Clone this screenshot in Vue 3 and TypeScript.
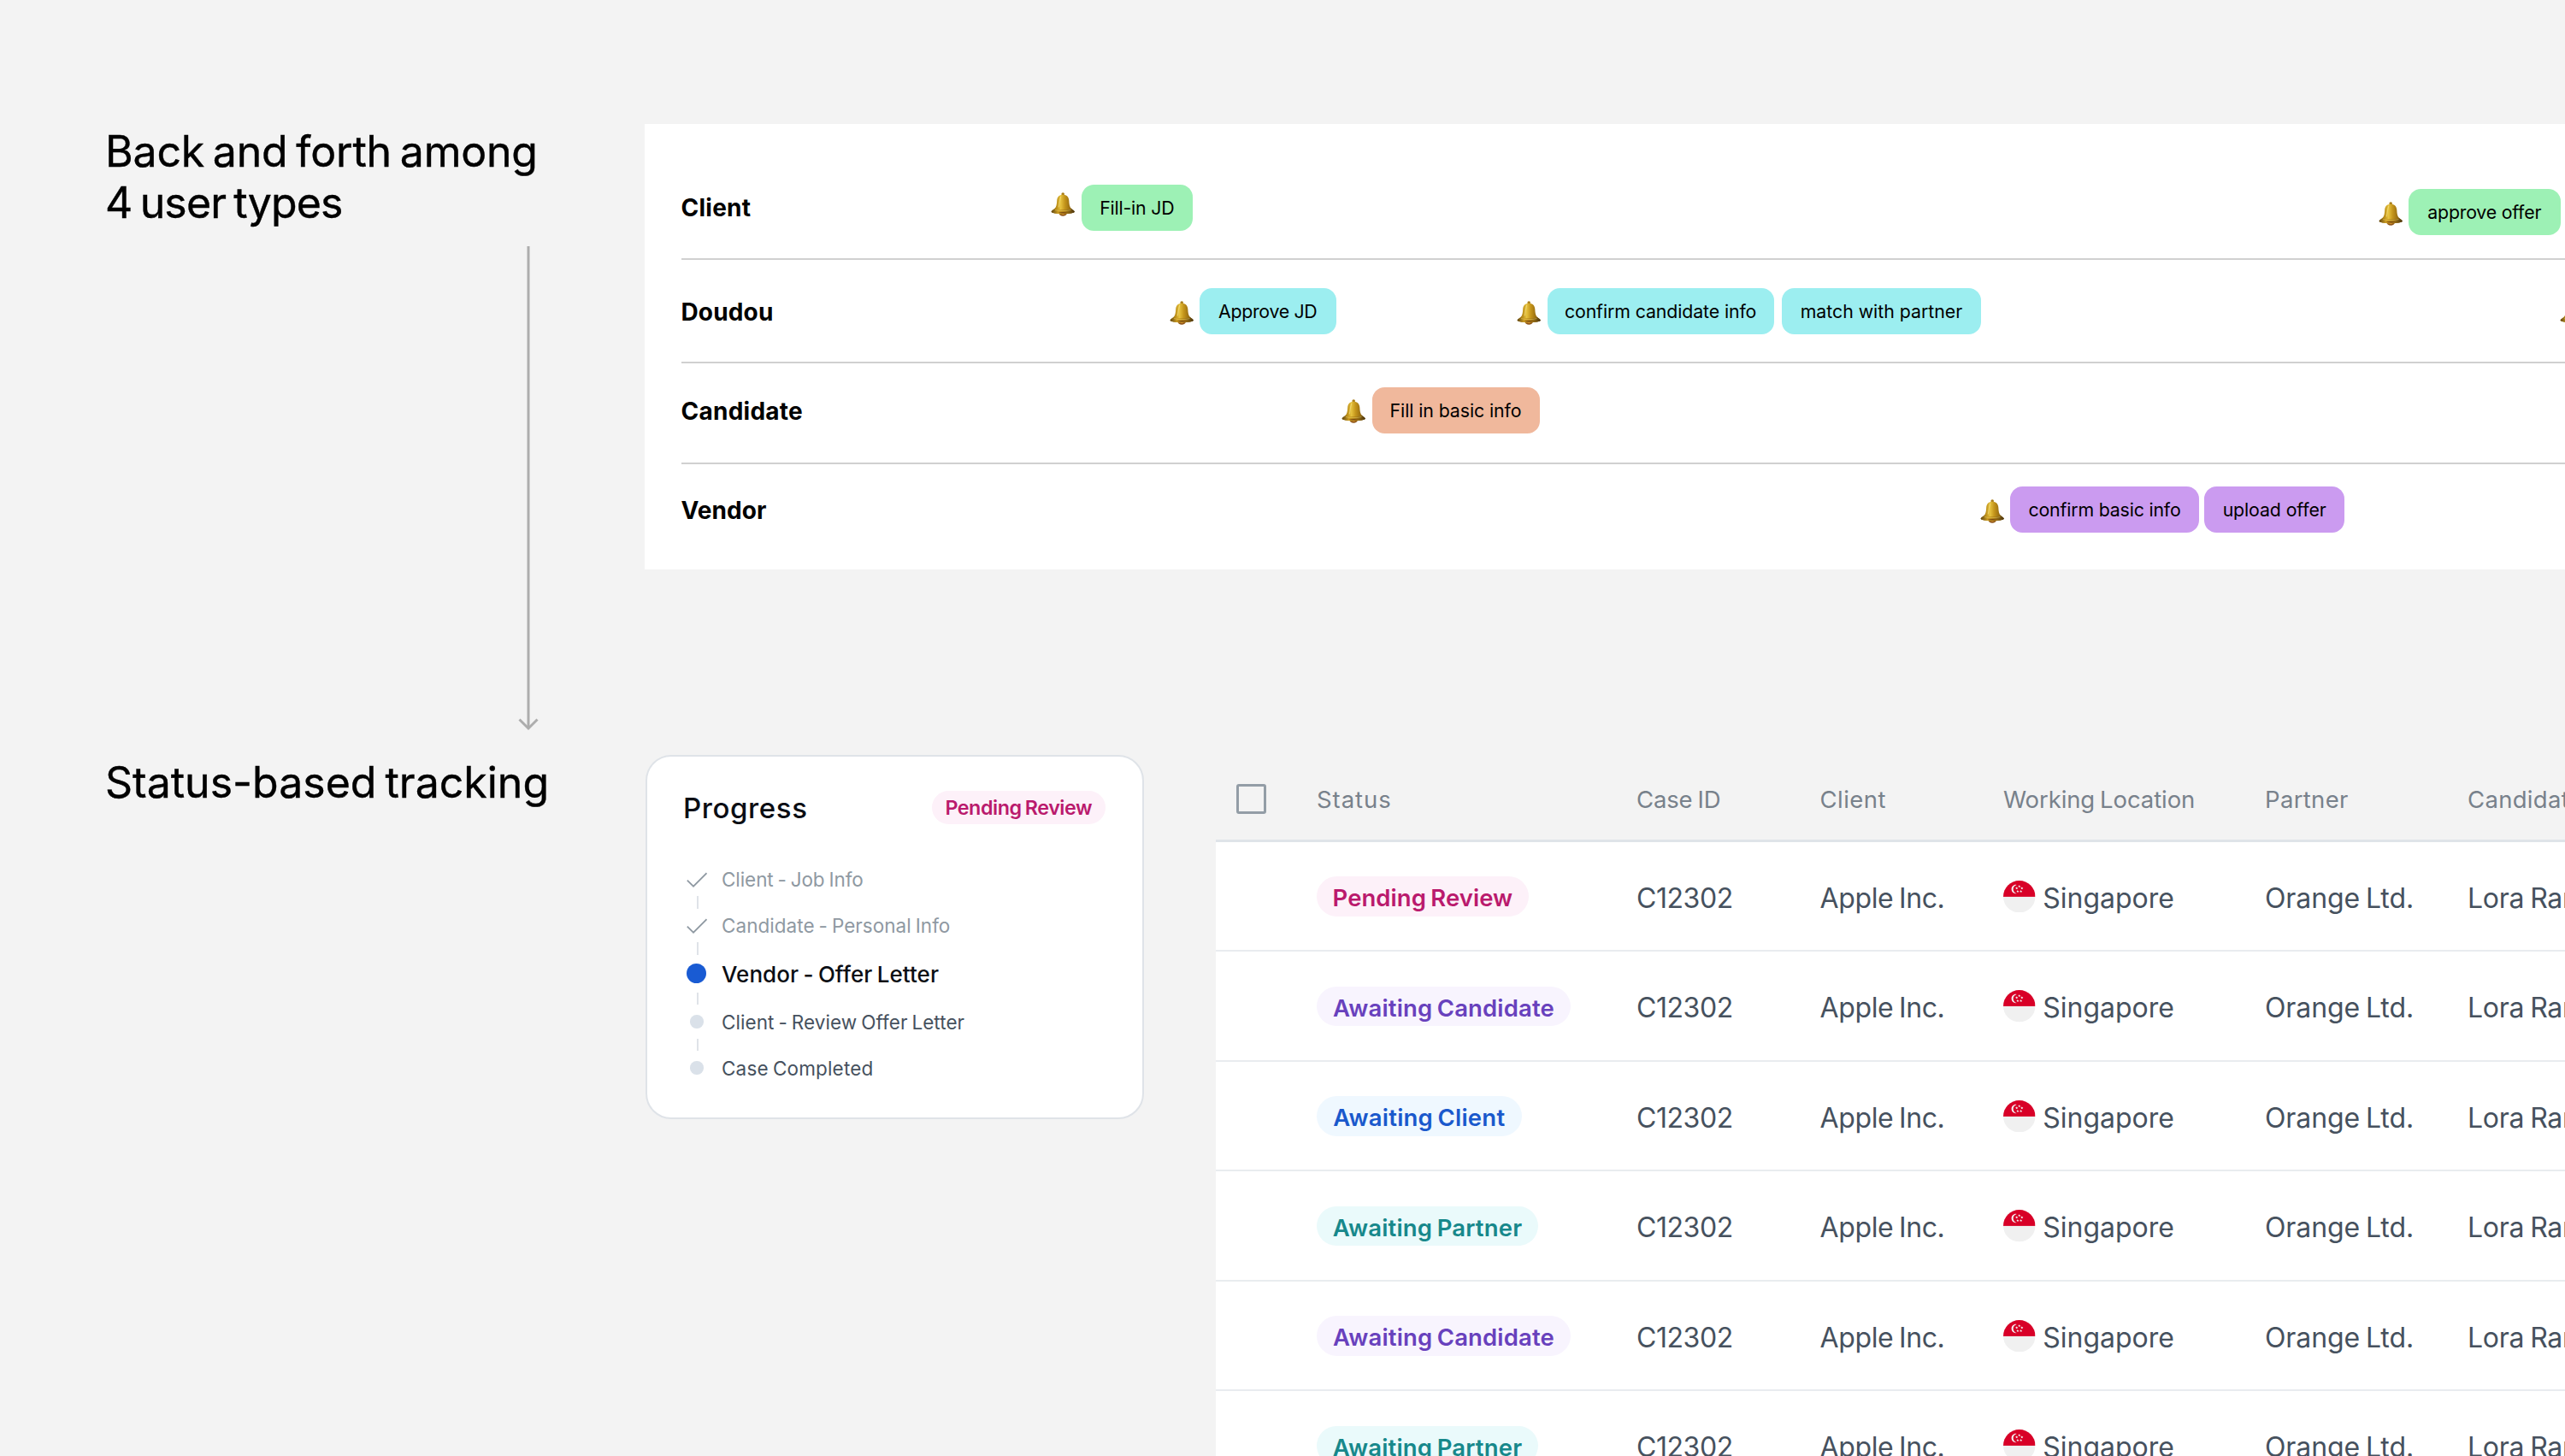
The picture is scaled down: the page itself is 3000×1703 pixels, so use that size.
<script setup lang="ts">
interface Chip { text: string; width: number; tracking: number }
interface Stage { x: number; top: number; bellTop: number; gap: number; chips: Chip[] }
interface Lane { name: string; tone: string; height: number; labelTop: number; tracking: number; stages: Stage[] }

const BELL_SLOT = 35.5
const TRACK_START = 180

const lanes: Lane[] = [
  {
    name: 'Client', tone: 'green', height: 159, labelTop: 81, tracking: 0.26,
    stages: [
      { x: 1229, top: 71, bellTop: 9, gap: 0, chips: [{ text: 'Fill-in JD', width: 130.5, tracking: -0.19 }] },
      { x: 2781.5, top: 76, bellTop: 15, gap: 0, chips: [{ text: 'approve offer', width: 177.5, tracking: -0.2 }] },
    ],
  },
  {
    name: 'Doudou', tone: 'cyan', height: 121, labelTop: 43.5, tracking: 0.15,
    stages: [
      { x: 1367.5, top: 33, bellTop: 15, gap: 0, chips: [{ text: 'Approve JD', width: 159.5, tracking: -0.3 }] },
      {
        x: 1774, top: 33, bellTop: 15, gap: 9.5,
        chips: [
          { text: 'confirm candidate info', width: 265.2, tracking: -0.1 },
          { text: 'match with partner', width: 232.5, tracking: -0.02 },
        ],
      },
      { x: 2994.5, top: 33, bellTop: 15, gap: 0, chips: [] },
    ],
  },
  {
    name: 'Candidate', tone: 'orange', height: 118, labelTop: 38.5, tracking: 0.25,
    stages: [
      { x: 1569, top: 28, bellTop: 13.5, gap: 0, chips: [{ text: 'Fill in basic info', width: 196, tracking: -0.08 }] },
    ],
  },
  {
    name: 'Vendor', tone: 'purple', height: 123, labelTop: 37, tracking: 0.05,
    stages: [
      {
        x: 2315.7, top: 26, bellTop: 15.3, gap: 6.3,
        chips: [
          { text: 'confirm basic info', width: 220.7, tracking: -0.17 },
          { text: 'upload offer', width: 164, tracking: -0.1 },
        ],
      },
    ],
  },
]

const LANE_LEFT = 796.5

// Distance between a stage and whatever precedes it on the lane.
function leadIn(lane: Lane, index: number): number {
  const stage = lane.stages[index]
  if (index === 0) return stage.x - LANE_LEFT - TRACK_START
  const prev = lane.stages[index - 1]
  const chips = prev.chips.reduce((sum, c) => sum + c.width, 0)
  const end = prev.x + BELL_SLOT + chips + prev.gap * Math.max(prev.chips.length - 1, 0)
  return stage.x - end
}

interface Step { text: string; state: 'done' | 'active' | 'todo'; tracking: number }
const steps: Step[] = [
  { text: 'Client - Job Info', state: 'done', tracking: -0.08 },
  { text: 'Candidate - Personal Info', state: 'done', tracking: 0.03 },
  { text: 'Vendor - Offer Letter', state: 'active', tracking: 0.04 },
  { text: 'Client - Review Offer Letter', state: 'todo', tracking: 0.05 },
  { text: 'Case Completed', state: 'todo', tracking: 0.17 },
]

const columns = [
  { text: 'Status', tracking: 0.95 },
  { text: 'Case ID', tracking: -0.15 },
  { text: 'Client', tracking: 0.46 },
  { text: 'Working Location', tracking: -0.1 },
  { text: 'Partner', tracking: 0.32 },
  { text: 'Candidate', tracking: 0.3 },
]

const statuses = {
  review: { text: 'Pending Review', width: 247.8, tracking: 0.06 },
  candidate: { text: 'Awaiting Candidate', width: 297, tracking: 0.15 },
  client: { text: 'Awaiting Client', width: 239.5, tracking: 0.22 },
  partner: { text: 'Awaiting Partner', width: 259, tracking: 0.17 },
}
type StatusKey = keyof typeof statuses
const cases: StatusKey[] = ['review', 'candidate', 'client', 'partner', 'candidate', 'partner']

const stars = [0, 1, 2, 3, 4].map((i) => {
  const a = (i * 72 - 90) * (Math.PI / 180)
  const cx = 256 + 44 * Math.cos(a)
  const cy = 136 + 44 * Math.sin(a)
  const pts: string[] = []
  for (let k = 0; k < 10; k++) {
    const r = k % 2 ? 10 : 23
    const b = (k * 36 - 90) * (Math.PI / 180)
    pts.push(`${(cx + r * Math.cos(b)).toFixed(1)},${(cy + r * Math.sin(b)).toFixed(1)}`)
  }
  return pts.join(' ')
})
</script>

<template>
  <main class="page">
    <svg class="defs" width="0" height="0" aria-hidden="true">
      <defs>
        <linearGradient id="bellBody" x1="0" x2="1" y1="0" y2="0">
          <stop offset="0" stop-color="#7d5a10" />
          <stop offset="0.22" stop-color="#b98c18" />
          <stop offset="0.4" stop-color="#e6c23e" />
          <stop offset="0.58" stop-color="#c4951b" />
          <stop offset="0.82" stop-color="#94690f" />
          <stop offset="1" stop-color="#5f430e" />
        </linearGradient>
        <linearGradient id="bellRim" x1="0" x2="1" y1="0" y2="0">
          <stop offset="0" stop-color="#5f4512" />
          <stop offset="0.3" stop-color="#cfa022" />
          <stop offset="0.6" stop-color="#a87b15" />
          <stop offset="1" stop-color="#4c360f" />
        </linearGradient>
        <symbol id="bell" viewBox="0 0 28.5 28">
          <circle cx="14.2" cy="2.1" r="1.8" fill="#a87c18" />
          <path d="M9.6 24.2a4.6 3.6 0 0 0 9.2 0z" fill="#8f5518" />
          <path d="M12.2 24a2.4 3 0 0 0 4.6 0z" fill="#d98a34" />
          <path d="M14.2 2.8c4.3 0 6.8 2.6 7.1 6.600.3 4.600.5 7.600 3 9.800 1.500 1.300 3.600 2.400 3.600 3.400 0 1.700-6 2.700-13.700 2.700S.6 24.300.6 22.600c0-1 2.100-2.100 3.600-3.400 2.500-2.200 2.700-5.200 3-9.800.3-4 2.700-6.600 7-6.600z" fill="url(#bellBody)" />
          <path d="M4.200 19.200c2.400 1.500 17.700 1.500 20.100 0 1.500 1.300 3.600 2.400 3.600 3.400 0 1.700-6 2.700-13.700 2.700S.6 24.300.6 22.600c0-1 2.100-2.100 3.600-3.400z" fill="url(#bellRim)" />
          <path d="M5 20.600c4.500 1.300 13.500 1.300 18.500 0" fill="none" stroke="#f0d468" stroke-width="0.8" stroke-opacity="0.6" />
          <path d="M8.600 23.700c3.300-1 8-1 11.200 0-3 .9-8 .9-11.200 0z" fill="#7e4d14" />
          <path d="M11.600 5.400c-1.200 2.700-1.300 7.500-2.200 11.600" fill="none" stroke="#f8e48a" stroke-width="1.200" stroke-linecap="round" stroke-opacity="0.6" />
        </symbol>
        <clipPath id="flagClip"><circle cx="256" cy="256" r="256" /></clipPath>
        <symbol id="flag" viewBox="0 0 512 512">
          <g clip-path="url(#flagClip)">
            <rect width="512" height="512" fill="#f0f0f0" />
            <rect width="512" height="258" fill="#d80027" />
          </g>
          <path transform="translate(24 14)" fill="#f0f0f0" d="M135 122.400c0-34 24.200-62.400 56.400-68.800a70 70 0 0 0-14.200-1.400c-38.800 0-70.200 31.400-70.200 70.200s31.400 70.300 70.200 70.300a70 70 0 0 0 14.200-1.400c-32.200-6.400-56.400-34.800-56.400-68.900z" />
          <polygon v-for="(p, i) in stars" :key="i" :points="p" fill="#f0f0f0" />
        </symbol>
      </defs>
    </svg>

    <aside class="side">
      <h1 class="title">
        <span class="title-line first">Back and forth among</span>
        <span class="title-line second">4 user types</span>
      </h1>
      <svg class="arrow" width="26" height="568" viewBox="0 0 26 568" fill="none" stroke="#adadad" stroke-width="3">
        <path d="M13 0V564" />
        <path d="M2.500 553.500 13 564l10.500-10.500" />
      </svg>
      <h1 class="title"><span class="title-line third">Status-based tracking</span></h1>
    </aside>

    <div class="content">
      <section class="lanes">
        <div v-for="lane in lanes" :key="lane.name" class="lane" :class="lane.tone" :style="{ height: lane.height + 'px' }">
          <div class="lane-name" :style="{ marginTop: lane.labelTop + 'px', letterSpacing: lane.tracking + 'px' }">{{ lane.name }}</div>
          <div
            v-for="(stage, i) in lane.stages"
            :key="i"
            class="stage"
            :style="{ marginLeft: leadIn(lane, i) + 'px', marginTop: stage.top + 'px' }"
          >
            <span class="bell-slot" :style="{ paddingTop: stage.bellTop + 'px' }">
              <svg class="bell" width="28.5" height="28"><use href="#bell" /></svg>
            </span>
            <div class="chips" :style="{ gap: stage.gap + 'px' }">
              <span
                v-for="chip in stage.chips"
                :key="chip.text"
                class="chip"
                :style="{ width: chip.width + 'px', letterSpacing: chip.tracking + 'px' }"
              >{{ chip.text }}</span>
            </div>
          </div>
        </div>
      </section>

      <div class="tracking">
        <section class="card">
          <header class="card-head">
            <h2 class="card-title">Progress</h2>
            <span class="pill small review">Pending Review</span>
          </header>
          <ol class="steps">
            <template v-for="(step, i) in steps" :key="step.text">
              <li v-if="i > 0" class="link"><span class="link-line"></span></li>
              <li class="step" :class="step.state">
                <span class="mark">
                  <svg v-if="step.state === 'done'" width="24" height="18" viewBox="0 0 24 18" fill="none" stroke="#8f99a2" stroke-width="1.7">
                    <path d="M.8 9.700 8 16.700 23.500 1.200" />
                  </svg>
                  <span v-else class="dot"></span>
                </span>
                <span class="step-text" :style="{ letterSpacing: step.tracking + 'px' }">{{ step.text }}</span>
              </li>
            </template>
          </ol>
        </section>

        <section class="table">
          <div class="thead">
            <span class="check-cell"><span class="checkbox"></span></span>
            <span v-for="c in columns" :key="c.text" class="th" :style="{ letterSpacing: c.tracking + 'px' }">{{ c.text }}</span>
          </div>
          <div v-for="(key, i) in cases" :key="i" class="row">
            <span></span>
            <span>
              <span
                class="pill"
                :class="key"
                :style="{ width: statuses[key].width + 'px', letterSpacing: statuses[key].tracking + 'px' }"
              >{{ statuses[key].text }}</span>
            </span>
            <span class="td case-id">C12302</span>
            <span class="td client-name">Apple Inc.</span>
            <span class="place">
              <svg class="flag" width="37.5" height="37.5"><use href="#flag" /></svg>
              <span class="td">Singapore</span>
            </span>
            <span class="td partner-name">Orange Ltd.</span>
            <span class="td candidate-name">Lora Ran</span>
          </div>
        </section>
      </div>
    </div>
  </main>
</template>

<style>
html,
body {
  margin: 0;
  background: #f3f3f3;
  overflow: hidden;
}
</style>

<style scoped>
.page {
  display: flex;
  width: 3000px;
  height: 1703px;
  overflow: hidden;
  background: #f3f3f3;
  font-family: Inter, "Liberation Sans", sans-serif;
  color: #000;
}
.page * {
  box-sizing: border-box;
}
.defs {
  position: absolute;
}
.side {
  flex: none;
  display: flex;
  flex-direction: column;
  width: 754px;
  padding: 147px 0 0 123px;
}
.title {
  margin: 0;
  font-size: 50px;
  font-weight: 400;
  line-height: 60px;
  word-spacing: -4px;
  white-space: nowrap;
  -webkit-text-stroke: 0.4px #000;
}
.title-line {
  display: block;
}
.first {
  letter-spacing: -0.2px;
}
.second {
  letter-spacing: -0.86px;
}
.third {
  letter-spacing: 0;
}
.arrow {
  margin: 21px 0 28.5px 482px;
}
.content {
  flex: none;
  width: 2246px;
  padding-top: 145px;
}
.lanes {
  height: 521px;
  padding-left: 42.5px;
  background: #fff;
  overflow: hidden;
}
.lane {
  display: flex;
  align-items: flex-start;
  border-bottom: 2px solid #d0d0d0;
}
.lane:last-child {
  border-bottom: 0;
}
.lane-name {
  flex: none;
  width: 180px;
  font-size: 28px;
  font-weight: 700;
  line-height: 34px;
}
.stage {
  flex: none;
  display: flex;
  align-items: flex-start;
}
.bell-slot {
  flex: none;
  width: 35.5px;
}
.bell {
  display: block;
}
.chips {
  display: flex;
}
.chip {
  flex: none;
  height: 53.7px;
  border-radius: 14.5px;
  font-size: 21.3px;
  line-height: 54.5px;
  text-align: center;
  white-space: nowrap;
}
.green .chip {
  background: #9df1b5;
}
.cyan .chip {
  background: #9ceef0;
}
.orange .chip {
  background: #f0b89c;
}
.purple .chip {
  background: #cb9bf0;
}
.tracking {
  display: flex;
  align-items: flex-start;
  margin-top: 217px;
}
.card {
  flex: none;
  width: 582.5px;
  height: 426px;
  margin: 0 84.5px 0 1px;
  border: 2px solid #dfe3e8;
  border-radius: 30px;
  background: #fff;
}
.card-head {
  display: flex;
  align-items: flex-start;
  justify-content: space-between;
  padding: 40px 43px 0 42px;
}
.card-title {
  margin: 0;
  font-size: 33px;
  font-weight: 500;
  line-height: 40px;
  letter-spacing: 0.6px;
  color: #0b0e14;
}
.pill {
  display: block;
  height: 46.5px;
  border-radius: 24px;
  padding-top: 2px;
  font-size: 27.5px;
  font-weight: 600;
  line-height: 46.5px;
  word-spacing: -1.65px;
  text-align: center;
  white-space: nowrap;
}
.pill.small {
  width: 202.5px;
  height: 39px;
  padding-top: 1px;
  font-size: 23.3px;
  line-height: 38px;
  letter-spacing: -0.45px;
  word-spacing: -1.2px;
}
.review {
  background: #fdf1f9;
  color: #ba1a6d;
}
.candidate {
  background: #f8f4fe;
  color: #6841bd;
}
.client {
  background: #eff8ff;
  color: #1a59cc;
}
.partner {
  background: #eafafb;
  color: #17888b;
}
.steps {
  margin: 0;
  padding: 50px 0 0 46px;
  list-style: none;
}
.step {
  display: flex;
  align-items: flex-start;
  height: 27px;
  font-size: 22.5px;
  line-height: 27px;
  word-spacing: -1.35px;
  white-space: nowrap;
}
.mark {
  display: flex;
  align-items: center;
  justify-content: center;
  width: 24px;
  height: 100%;
  margin-right: 17px;
}
.dot {
  width: 15.5px;
  height: 15.5px;
  margin-right: 0.5px;
  border-radius: 50%;
  background: #dae1e9;
}
.done {
  color: #8f99a2;
}
.todo {
  color: #46515e;
}
.active {
  height: 31.5px;
  font-size: 26px;
  font-weight: 500;
  line-height: 34px;
  word-spacing: -1.56px;
  color: #0b0e14;
}
.active .dot {
  width: 23px;
  height: 23px;
  background: #195bd3;
}
.link {
  display: flex;
  height: 27px;
  padding: 6px 0 6.5px 12px;
}
.link-line {
  width: 2px;
  background: #dfe3e8;
}
.table {
  flex: none;
  width: 1578px;
}
.thead,
.row {
  display: grid;
  grid-template-columns: 118px 374px 214.5px 214.5px 306px 237px 114px;
}
.thead {
  height: 101.5px;
  padding-top: 34px;
  border-bottom: 3px solid #dfe4e9;
}
.check-cell {
  padding-left: 24px;
}
.checkbox {
  display: block;
  width: 35px;
  height: 35px;
  border: 3px solid #939da6;
  border-radius: 3px;
}
.th {
  padding-top: 1px;
  font-size: 27.5px;
  line-height: 34px;
  word-spacing: -1.65px;
  white-space: nowrap;
  color: #78818b;
}
.row {
  align-items: center;
  height: 128.5px;
  padding-top: 1.5px;
  border-bottom: 2px solid #e9ecef;
  background: #fff;
}
.td {
  padding-top: 4px;
  font-size: 32px;
  line-height: 40px;
  word-spacing: -1.92px;
  white-space: nowrap;
  color: #46515e;
}
.case-id {
  letter-spacing: -0.43px;
}
.client-name {
  letter-spacing: -0.38px;
}
.partner-name {
  letter-spacing: -0.1px;
}
.candidate-name {
  letter-spacing: -0.25px;
}
.place {
  display: flex;
  align-items: center;
}
.flag {
  margin-right: 8.7px;
}
</style>
